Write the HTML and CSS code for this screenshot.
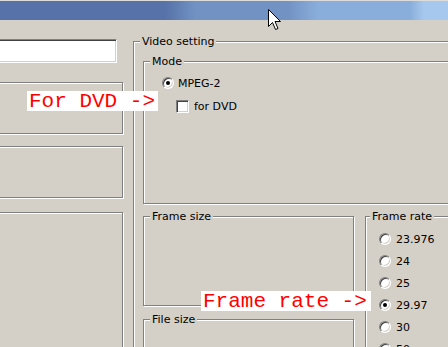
FILE: index.html
```html
<!DOCTYPE html>
<html>
<head>
<meta charset="utf-8">
<title>Video setting</title>
<link rel="stylesheet" href="styles.css">
</head>
<body>
<div class="window">
  <div class="titlebar"></div>
  <div class="client">
    <div class="left-col">
      <div class="edit"></div>
      <div class="group g1"></div>
      <div class="group g2"></div>
      <div class="group g3"></div>
    </div>
    <div class="group video">
      <span class="legend">Video setting</span>
      <div class="group mode">
        <span class="legend">Mode</span>
        <div class="opt"><span class="radio checked"></span><span class="opt-text">MPEG-2</span></div>
        <div class="opt sub"><span class="check"></span><span class="opt-text">for DVD</span></div>
      </div>
      <div class="lower">
        <div class="sizes">
          <div class="group fsize"><span class="legend">Frame size</span></div>
          <div class="group filesize"><span class="legend">File size</span></div>
        </div>
        <div class="group frate">
          <span class="legend legend-tight">Frame rate</span>
          <div class="rate"><span class="radio"></span><span class="rate-text">23.976</span></div>
          <div class="rate"><span class="radio"></span><span class="rate-text">24</span></div>
          <div class="rate"><span class="radio"></span><span class="rate-text">25</span></div>
          <div class="rate"><span class="radio checked"></span><span class="rate-text">29.97</span></div>
          <div class="rate"><span class="radio"></span><span class="rate-text">30</span></div>
          <div class="rate"><span class="radio"></span><span class="rate-text">50</span></div>
        </div>
      </div>
    </div>
  </div>
  <div class="note note-dvd">For DVD -&gt;</div>
  <div class="note note-rate">Frame rate -&gt;</div>
  <svg class="cursor" width="14" height="22" viewBox="0 0 14 22">
    <path d="M0.5 0.5 L0.5 17.5 L4.5 13.5 L7.5 20.5 L10 19.5 L7 12.5 L12.5 12.5 Z" fill="#fff" stroke="#000" stroke-width="1"/>
  </svg>
</div>
</body>
</html>
```
FILE: styles.css
```css
html, body {
  margin: 0;
  padding: 0;
}
body {
  background: #d4d0c8;
  font-family: "DejaVu Sans", sans-serif;
  font-size: 11px;
  line-height: 13px;
  color: #000;
}
.window {
  position: relative;
  width: 448px;
  height: 347px;
  overflow: hidden;
  background: #d4d0c8;
}
.titlebar {
  height: 19px;
  border-top: 1px solid #dcdcdc;
  background: linear-gradient(90deg,
    #5672a8 0, #5672a8 165px,
    #7292c4 196px, #7292c4 288px,
    #8aaedb 318px, #8aaedb 410px,
    #a6c8ee 424px, #a6c8ee 448px);
}
.client {
  display: flex;
  align-items: flex-start;
}
.left-col {
  margin-left: -20px;
  width: 143px;
  flex: none;
  display: flex;
  flex-direction: column;
}
.edit {
  margin-top: 19px;
  width: 137px;
  height: 24px;
  box-sizing: border-box;
  background: #fff;
  border: 1px solid;
  border-color: #808080 #fff #fff #808080;
  box-shadow: inset 1px 1px 0 #404040, inset -1px -1px 0 #d4d0c8;
}
.group {
  position: relative;
  box-sizing: border-box;
  border: 1px solid #808080;
  box-shadow: inset 1px 1px 0 #fff, 1px 1px 0 #fff;
}
.g1 {
  margin-top: 19px;
  height: 52px;
}
.g2 {
  margin-top: 12px;
  height: 52px;
}
.g3 {
  margin-top: 14px;
  height: 200px;
}
.legend {
  position: absolute;
  top: -7px;
  left: 6px;
  padding: 0 2px;
  background: #d4d0c8;
  white-space: nowrap;
}
.legend-tight {
  left: 4px;
}
.video {
  flex: none;
  margin-left: 10px;
  margin-top: 21px;
  width: 340px;
  height: 330px;
  padding: 19px 0 0 9px;
}
.mode {
  width: 330px;
  height: 143px;
  padding: 15px 0 0 18px;
}
.opt {
  display: flex;
  align-items: center;
  height: 12px;
}
.opt.sub {
  margin-top: 11px;
  margin-left: 14px;
  height: 13px;
}
.opt-text {
  margin-left: 4px;
  white-space: nowrap;
}
.opt.sub .opt-text {
  margin-left: 5px;
}
.radio {
  position: relative;
  flex: none;
  width: 12px;
  height: 12px;
  box-sizing: border-box;
  border-radius: 50%;
  background: #fff;
  border: 1px solid;
  border-color: #808080 #fff #fff #808080;
  box-shadow: inset 1px 1px 0 #404040, inset -1px -1px 0 #d4d0c8;
}
.radio.checked::after {
  content: "";
  position: absolute;
  left: 3px;
  top: 3px;
  width: 4px;
  height: 4px;
  border-radius: 50%;
  background: #000;
}
.check {
  flex: none;
  width: 13px;
  height: 13px;
  box-sizing: border-box;
  background: #fff;
  border: 1px solid;
  border-color: #808080 #fff #fff #808080;
  box-shadow: inset 1px 1px 0 #404040, inset -1px -1px 0 #d4d0c8;
}
.lower {
  display: flex;
  align-items: flex-start;
  gap: 11px;
  margin-top: 12px;
}
.sizes {
  display: flex;
  flex-direction: column;
  flex: none;
}
.fsize {
  width: 211px;
  height: 90px;
}
.filesize {
  margin-top: 13px;
  width: 211px;
  height: 80px;
}
.frate {
  flex: none;
  width: 120px;
  height: 200px;
  padding: 11px 0 0 13px;
}
.rate {
  display: flex;
  align-items: center;
  height: 22px;
}
.rate-text {
  margin-left: 5px;
}
.note {
  position: absolute;
  height: 20px;
  box-sizing: border-box;
  padding: 1px 0 0 2px;
  background: #fff;
  color: #ff0000;
  font-family: "Liberation Mono", monospace;
  font-size: 21px;
  line-height: 19px;
  white-space: pre;
}
.note-dvd {
  left: 27px;
  top: 91px;
  width: 131px;
}
.note-rate {
  left: 201px;
  top: 291px;
  width: 170px;
}
.cursor {
  position: absolute;
  left: 268px;
  top: 9px;
}
```
